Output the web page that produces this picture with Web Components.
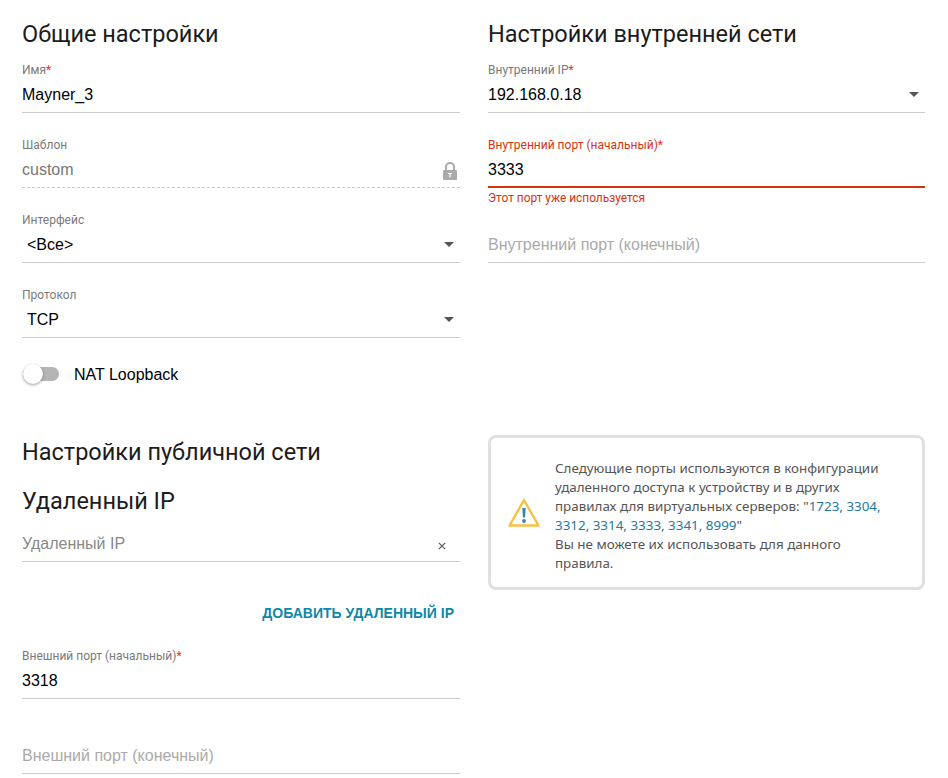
<!DOCTYPE html>
<html lang="ru">
<head>
<meta charset="utf-8">
<title>Виртуальный сервер</title>
<style>
    html, body { margin: 0; background: #fff; }
    body { font-family: "Liberation Sans", Arial, sans-serif; }
</style>
</head>
<body>
<rule-form></rule-form>

<template id="form-template">
<style>
    :host {
        display: grid;
        grid-template-columns: 438px 437px;
        grid-template-rows: 416px auto;
        column-gap: 28px;
        padding: 19px 23px 0 22px;
        width: 903px;
        box-sizing: content-box;
    }

    .public { padding-top: 2px; }

    .add {
        display: flex;
        justify-content: flex-end;
        margin: 25px 6px 28px 0;
        color: #0e88a8;
        font-size: 14px;
        font-weight: bold;
        line-height: 16px;
    }
</style>

<section>
    <form-title>Общие настройки</form-title>
    <form-field label="Имя" required value="Mayner_3"></form-field>
    <form-field label="Шаблон" value="custom" locked></form-field>
    <form-field label="Интерфейс" value="&lt;Все&gt;" select indent></form-field>
    <form-field label="Протокол" value="TCP" select indent></form-field>
    <form-toggle>NAT Loopback</form-toggle>
</section>

<section>
    <form-title>Настройки внутренней сети</form-title>
    <form-field label="Внутренний IP" required value="192.168.0.18" select></form-field>
    <form-field label="Внутренний порт (начальный)" required value="3333" error="Этот порт уже используется"></form-field>
    <form-field placeholder="Внутренний порт (конечный)"></form-field>
</section>

<section class="public">
    <form-title>Настройки публичной сети</form-title>
    <form-title sub>Удаленный IP</form-title>
    <form-field placeholder="Удаленный IP" dim clearable short></form-field>
    <div class="add">ДОБАВИТЬ УДАЛЕННЫЙ IP</div>
    <form-field label="Внешний порт (начальный)" required value="3318"></form-field>
    <form-field placeholder="Внешний порт (конечный)"></form-field>
</section>

<section>
    <form-notice>
        Следующие порты используются в конфигурации удаленного доступа к устройству и в других
        правилах для виртуальных серверов: "<span style="color:#1f7a9e">1723, 3304, 3312, 3314, 3333, 3341, 8999</span>"<br>
        Вы не можете их использовать для данного правила.
    </form-notice>
</section>
</template>

<template id="title-template">
<style>
    :host {
        display: block;
        height: 28px;
        margin-bottom: 16px;
        color: #1c1c1c;
        font-family: Roboto, "Liberation Sans", sans-serif;
        font-size: 23.5px;
        line-height: 30px;
    }

    :host([sub]) {
        margin-top: 21px;
        margin-bottom: -2px;
    }
</style>
<slot></slot>
</template>

<template id="field-template">
<style>
    :host {
        display: block;
        height: 75px;
    }

    :host([short]) {
        height: 68px;
    }

    .label {
        height: 14px;
        margin-bottom: 5px;
        color: #7a7a7a;
        font-family: Roboto, "Liberation Sans", sans-serif;
        font-size: 12px;
        line-height: 14px;
    }

    .label i {
        color: #e0342a;
        font-style: normal;
    }

    .box {
        display: flex;
        align-items: flex-start;
        justify-content: space-between;
        height: 30px;
        border-bottom: 1px solid #ccc;
    }

    .value {
        height: 24px;
        margin-top: 1px;
        color: #000;
        font-size: 16px;
        line-height: 24px;
    }

    .placeholder { color: #aaa; }
    :host([dim]) .placeholder { color: #888; }
    :host([indent]) .value { padding-left: 5px; }
    :host([locked]) .value { color: #777; }
    :host([locked]) .box { border-bottom: 1px dashed #ccc; }

    :host([error]) .label { color: #d8330f; }
    :host([error]) .box { height: 29px; border-bottom: 2px solid #d8330f; }

    .error {
        height: 15px;
        margin-top: 3px;
        color: #d8330f;
        font-family: Roboto, "Liberation Sans", sans-serif;
        font-size: 11.9px;
        line-height: 15px;
    }

    svg { flex: none; }
</style>
<div class="label"></div>
<div class="box">
    <div class="value"></div>
</div>
<div class="error" hidden></div>
</template>

<template id="toggle-template">
<style>
    :host {
        display: flex;
        align-items: center;
        height: 20px;
        margin-top: 1px;
        color: #000;
        font-size: 16px;
    }

    .switch {
        position: relative;
        width: 36px;
        height: 14px;
        margin: 0 15px 0 1px;
        border-radius: 7px;
        background: #b4b4b4;
    }

    .knob {
        position: absolute;
        left: 0;
        top: -3px;
        width: 20px;
        height: 20px;
        border-radius: 50%;
        background: #fff;
        box-shadow: 0 1px 3px rgba(0, 0, 0, .4);
    }

    slot { display: block; margin-top: 2px; }
</style>
<div class="switch"><div class="knob"></div></div>
<slot></slot>
</template>

<template id="notice-template">
<style>
    :host {
        display: flex;
        align-items: center;
        box-sizing: border-box;
        height: 155px;
        padding: 0 32px 0 17px;
        border: 3px solid #e0e0e0;
        border-radius: 8px;
        color: #555;
        font-family: "Noto Sans", sans-serif;
        font-size: 13.4px;
        line-height: 19px;
    }

    svg { flex: none; margin-right: 15px; }
    .text { margin-top: 6px; }
</style>
<svg width="32" height="30" viewBox="0 0 32 30">
    <path d="M16 2 L30.5 27.5 H1.5 Z" fill="#fff" stroke="#f5c243" stroke-width="2.4" stroke-linejoin="round"/>
    <path d="M14.3 10 h3.4 l-.6 9.5 h-2.2 Z" fill="#3f83a3"/>
    <circle cx="16" cy="23" r="1.9" fill="#3f83a3"/>
</svg>
<div class="text"><slot></slot></div>
</template>

<script>
    const ICONS = {
        arrow: `<svg width="10" height="5" viewBox="0 0 10 5" style="margin:10px 6px 0 0"><path d="M0 0 H10 L5 5 Z" fill="#555"/></svg>`,
        lock: `<svg width="14" height="18" viewBox="0 0 14 18" style="margin:5px 3px 0 0">
            <path d="M3 8 V5 a4 4 0 0 1 8 0 V8" fill="none" stroke="#aaa" stroke-width="2"/>
            <path d="M1 8 H13 a1 1 0 0 1 1 1 V17 a1 1 0 0 1 -1 1 H1 a1 1 0 0 1 -1 -1 V9 a1 1 0 0 1 1 -1 Z" fill="#aaa"/>
            <path d="M5 11 H9 V12 H7.6 V15.5 H6.4 V12 H5 Z" fill="#fff"/>
        </svg>`,
        clear: `<svg width="8" height="8" viewBox="0 0 8 8" style="margin:11px 14px 0 0"><path d="M.8 .8 L7.2 7.2 M7.2 .8 L.8 7.2" stroke="#5a5a5a" stroke-width="1.2"/></svg>`
    };

    // every element clones its own template into an open shadow root
    class Base extends HTMLElement {
        constructor(id) {
            super();
            this._shadowRoot = this.attachShadow({ mode: 'open' });
            this._shadowRoot.appendChild(document.getElementById(id).content.cloneNode(true));
        }
    }

    class RuleForm extends Base {
        constructor() { super('form-template'); }
    }

    class FormTitle extends Base {
        constructor() { super('title-template'); }
    }

    class FormToggle extends Base {
        constructor() { super('toggle-template'); }
    }

    class FormNotice extends Base {
        constructor() { super('notice-template'); }
    }

    class FormField extends Base {
        constructor() { super('field-template'); }

        connectedCallback() {
            const root = this._shadowRoot;
            const $label = root.querySelector('.label');
            const $value = root.querySelector('.value');
            const $box = root.querySelector('.box');
            const $error = root.querySelector('.error');

            $label.textContent = this.getAttribute('label') || '';
            if (this.hasAttribute('required')) {
                const star = document.createElement('i');
                star.textContent = '*';
                $label.appendChild(star);
            }

            if (this.hasAttribute('placeholder')) {
                $value.textContent = this.getAttribute('placeholder');
                $value.classList.add('placeholder');
            } else {
                $value.textContent = this.getAttribute('value');
            }

            if (this.hasAttribute('select')) $box.insertAdjacentHTML('beforeend', ICONS.arrow);
            if (this.hasAttribute('locked')) $box.insertAdjacentHTML('beforeend', ICONS.lock);
            if (this.hasAttribute('clearable')) $box.insertAdjacentHTML('beforeend', ICONS.clear);

            if (this.hasAttribute('error')) {
                $error.textContent = this.getAttribute('error');
                $error.hidden = false;
            }
        }
    }

    customElements.define('form-title', FormTitle);
    customElements.define('form-field', FormField);
    customElements.define('form-toggle', FormToggle);
    customElements.define('form-notice', FormNotice);
    customElements.define('rule-form', RuleForm);
</script>
</body>
</html>
